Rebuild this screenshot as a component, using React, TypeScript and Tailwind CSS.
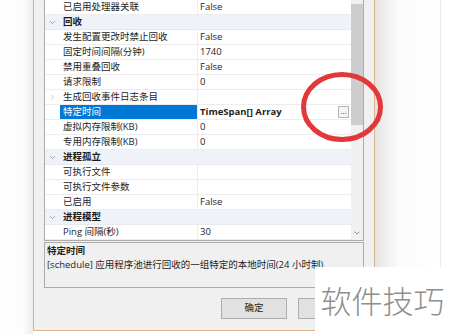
import React from "react";
import { ChevronDown, ChevronRight } from "lucide-react";

type Row = {
  name: string;
  value?: string;
  cat?: boolean;
  collapsed?: boolean;
  selected?: boolean;
};

const rows: Row[] = [
  { name: "已启用处理器关联", value: "False" },
  { name: "回收", cat: true },
  { name: "发生配置更改时禁止回收", value: "False" },
  { name: "固定时间间隔(分钟)", value: "1740" },
  { name: "禁用重叠回收", value: "False" },
  { name: "请求限制", value: "0" },
  { name: "生成回收事件日志条目", value: "", collapsed: true },
  { name: "特定时间", value: "TimeSpan[] Array", selected: true },
  { name: "虚拟内存限制(KB)", value: "0" },
  { name: "专用内存限制(KB)", value: "0" },
  { name: "进程孤立", cat: true },
  { name: "可执行文件", value: "" },
  { name: "可执行文件参数", value: "" },
  { name: "已启用", value: "False" },
  { name: "进程模型", cat: true },
  { name: "Ping 间隔(秒)", value: "30" },
];

const font = { fontFamily: '"Open Sans", "Noto Sans CJK SC", sans-serif' };

function GridRow({ row }: { row: Row }) {
  if (row.cat) {
    return (
      <div className="flex h-[15px] items-center border-b border-[#e6e9ee] bg-[#eff3f9]">
        <div className="flex w-[15px] shrink-0 justify-center">
          <ChevronDown size={9} strokeWidth={1.6} className="text-[#666]" />
        </div>
        <div className="pl-[3px] text-[9.5px] font-bold leading-none text-[#1a1a1a]">
          {row.name}
        </div>
      </div>
    );
  }
  return (
    <div className="flex h-[15px] border-b border-[#ededed] bg-white">
      <div className="flex w-[15px] shrink-0 items-center justify-center">
        {row.collapsed && (
          <ChevronRight size={9} strokeWidth={1.5} className="text-[#a0a0a0]" />
        )}
      </div>
      <div
        className={
          row.selected
            ? "flex w-[137px] shrink-0 items-center bg-[#0078d7] pl-[3px] text-[9.5px] text-white"
            : "flex w-[137px] shrink-0 items-center pl-[3px] text-[9.5px] text-[#1e1e1e]"
        }
      >
        {row.name}
      </div>
      <div className="flex flex-1 items-center border-l border-[#ededed] pl-[2px] text-[9.5px] text-[#1e1e1e]">
        <span className={row.selected ? "font-bold" : ""}>{row.value}</span>
        {row.selected && (
          <div className="ml-auto mr-[2px] flex h-[12px] w-[11px] items-end justify-center border border-[#b5b5b5] bg-[#f4f4f4] pb-[2px] text-[7px] leading-none text-[#333]">
            ...
          </div>
        )}
      </div>
    </div>
  );
}

export default function App() {
  return (
    <div
      className="relative flex h-[334px] w-[450px] overflow-hidden bg-white"
      style={font}
    >
      {/* left of dialog */}
      <div className="h-full w-[33px] shrink-0 bg-[linear-gradient(to_right,#fdfdfd_70%,#ececec)]" />

      {/* dialog */}
      <div className="flex h-[331px] w-[342px] shrink-0 flex-col border-x border-b border-[#dcb38c] bg-[#f0f0f0] px-[10px]">
        {/* property grid */}
        <div className="flex h-[241px] border-x border-b border-[#acacac] bg-white">
          <div className="flex-1">
            {rows.map((r, i) => (
              <GridRow key={i} row={r} />
            ))}
          </div>
          <div className="flex w-[12px] flex-col bg-[#f0f0f0]">
            <div className="mt-[4px] h-[121px] bg-[#cdcdcd]" />
            <div className="flex-1" />
            <div className="flex h-[14px] items-center justify-center">
              <ChevronDown size={8} strokeWidth={2} className="text-[#606060]" />
            </div>
          </div>
        </div>

        {/* description */}
        <div className="mt-[1px] h-[46px] border border-[#acacac] bg-[#f0f0f0] px-[2px] pt-[1px] text-[9.5px] leading-[14px] text-[#1e1e1e]">
          <div className="font-bold">特定时间</div>
          <div className="whitespace-nowrap">
            [schedule] 应用程序池进行回收的一组特定的本地时间(24 小时制).
          </div>
        </div>

        {/* buttons (second one sits under the watermark) */}
        <div className="mt-[10px] flex justify-end gap-[11px]">
          <button className="flex h-[21px] w-[66px] items-center justify-center border border-[#adadad] bg-[#e1e1e1] text-[9.5px] text-[#1e1e1e]">
            确定
          </button>
          <button className="h-[21px] w-[66px] border border-[#adadad] bg-[#e1e1e1]" />
        </div>
      </div>

      {/* right of dialog */}
      <div className="flex h-full flex-1">
        <div className="h-full w-[65px] bg-[linear-gradient(to_right,#e4e4e4,#fbfbfb_35%,#ffffff)]" />
        <div className="h-full flex-1 border-l border-[#ededed] bg-white" />
      </div>

      {/* red annotation circle */}
      <svg
        className="pointer-events-none absolute left-0 top-0"
        width="450"
        height="334"
      >
        <ellipse
          cx="342"
          cy="107"
          rx="38.5"
          ry="32.5"
          fill="none"
          stroke="#e2383b"
          strokeWidth="5"
        />
      </svg>

      {/* watermark */}
      <div className="absolute left-[315px] top-[267px] flex h-[67px] w-[135px] items-center justify-center bg-white">
        <span
          className="text-[31px] font-light text-[#8e8e8e]"
          style={{ fontFamily: '"Noto Sans CJK SC", sans-serif' }}
        >
          软件技巧
        </span>
      </div>
    </div>
  );
}
